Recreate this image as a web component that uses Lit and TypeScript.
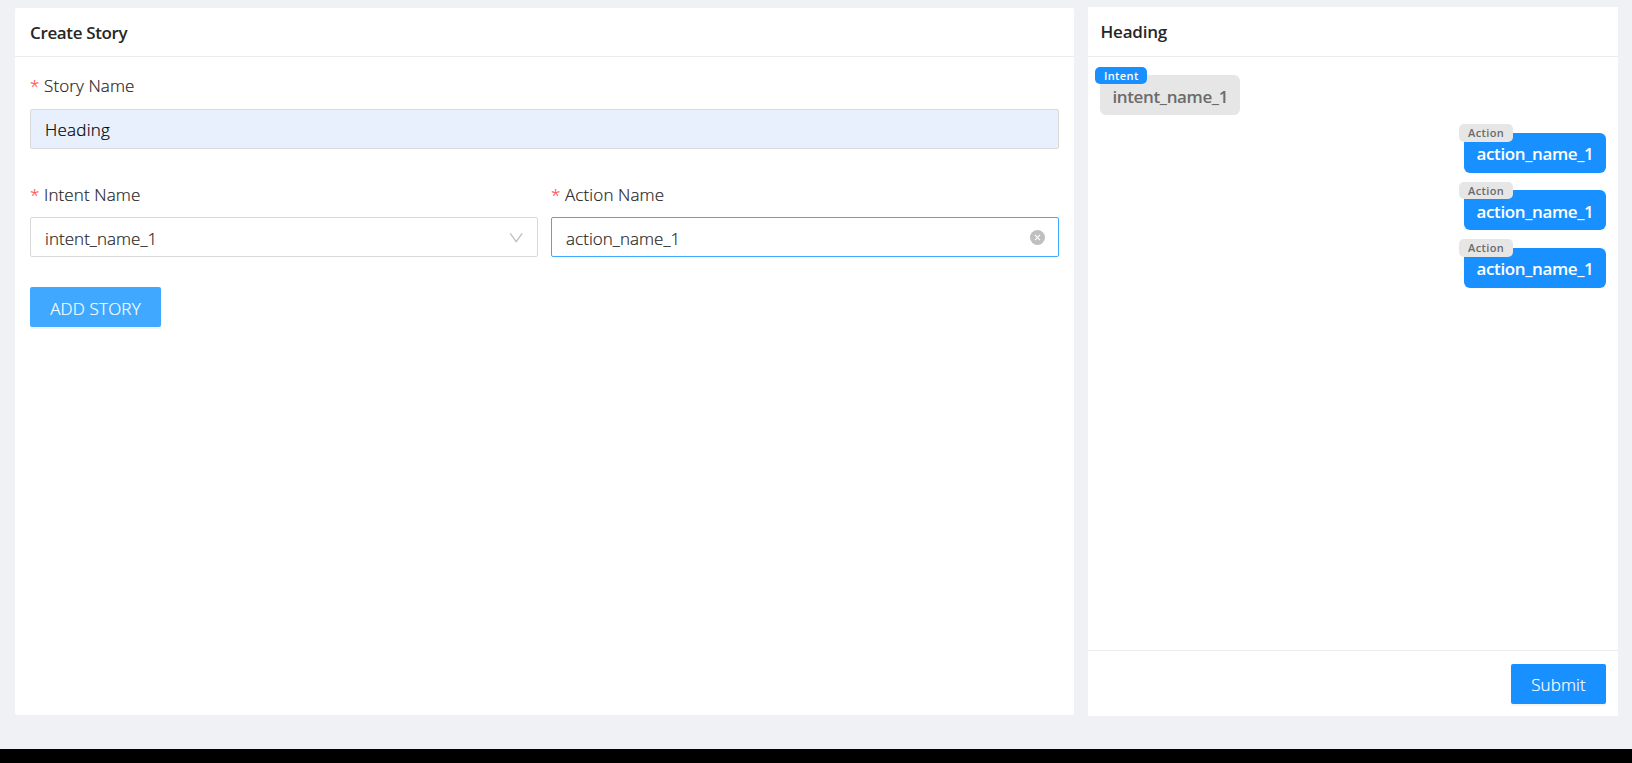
import { LitElement, html, css } from "lit";
import { customElement, property } from "lit/decorators.js";

@customElement("chat-bubble")
class ChatBubble extends LitElement {
  @property() tag = "";
  @property() text = "";
  @property({ reflect: true }) kind = "intent";
  static styles = css`
    :host {
      display: block;
      position: relative;
      box-sizing: border-box;
      height: 40px;
      padding: 1.8px 0 0 12.5px;
      border-radius: 6px;
      font-weight: 600;
      white-space: nowrap;
    }
    :host([kind="intent"]) { width: 140px; background: #e6e6e6; color: #6b6b6b; }
    :host([kind="action"]) { width: 142px; background: #1890ff; color: #fff; }
    .text { font-size: 17px; line-height: 40px; letter-spacing: -0.38px; }
    .tag {
      position: absolute;
      left: -5px;
      top: -8.4px;
      box-sizing: border-box;
      width: 52px;
      height: 17.5px;
      padding-left: 9px;
      border-radius: 5px;
      background: #1890ff;
      color: #fff;
      font-size: 11px;
      line-height: 18px;
      letter-spacing: 0.38px;
    }
    :host([kind="action"]) .tag { width: 54px; background: #e6e6e6; color: #6b6b6b; }
  `;
  render() {
    return html`<div class="text">${this.text}</div><div class="tag">${this.tag}</div>`;
  }
}

@customElement("app-root")
class AppRoot extends LitElement {
  static styles = css`
    :host {
      display: block;
      box-sizing: border-box;
      height: 763px;
      background: #f0f1f5;
      border-bottom: 14px solid #000;
      padding: 7px 14px 0 15px;
      font-family: "Open Sans", "Noto Sans", sans-serif;
      font-size: 17px;
      color: #262626;
      overflow: hidden;
    }
    * { box-sizing: border-box; }
    .page { display: flex; gap: 14px; align-items: flex-start; }
    .card { background: #fff; }
    .story { width: 1059px; height: 707px; margin-top: 1px; border-radius: 2px; }
    .preview { width: 530px; height: 709px; display: flex; flex-direction: column; }
    .head { height: 49px; border-bottom: 1px solid #ececee; padding: 1px 15px 0; line-height: 48px; font-weight: 600; }
    .preview .head { height: 50px; padding: 1px 12px 0 12.5px; }
    .title { letter-spacing: -0.36px; }
    .preview .title { letter-spacing: -0.2px; }
    .body { padding: 13px 15px 0; }
    .label, .field, .btn { font-weight: 300; letter-spacing: 0.12px; -webkit-text-stroke: 0.2px currentColor; }
    .label { display: flex; height: 39px; line-height: 34px; }
    .label.first { line-height: 32px; }
    .star { width: 14px; color: #ff4d4f; }
    .field {
      display: flex; align-items: center; justify-content: space-between;
      height: 40px; padding: 0 14px; border: 1px solid #d9d9d9; border-radius: 2px;
    }
    .row .field span { padding-top: 2px; letter-spacing: 0.04px; }
    .filled { background: #e8f0fe; color: #000; letter-spacing: 0.25px; }
    .row .focus { border-color: #40a9ff; padding-right: 13px; }
    .row { display: grid; grid-template-columns: 508px 508px; gap: 13px; margin-top: 29px; }
    .btn {
      display: flex; align-items: center; justify-content: center;
      height: 40px; border-radius: 2px; color: #fff; background: #1890ff;
      box-shadow: 0 2px 0 rgba(0, 0, 0, 0.045);
    }
    .add { width: 131px; margin-top: 30px; padding-top: 2px; background: #40a9ff; letter-spacing: 0.2px; }
    .submit { width: 95px; }
    .chat { flex: 1; display: flex; flex-direction: column; gap: 17.5px; padding: 18px 12px 0; }
    .chat chat-bubble[kind="action"] { align-self: flex-end; }
    .foot { height: 66px; border-top: 1px solid #ececee; padding: 13px 12px 0; display: flex; justify-content: flex-end; }
    svg { display: block; }
  `;
  label(t: string, extra = "") {
    return html`<div class="label ${extra}"><span class="star">*</span><span>${t}</span></div>`;
  }
  render() {
    return html`<div class="page">
      <section class="card story">
        <div class="head"><span class="title">Create Story</span></div>
        <div class="body">
          ${this.label("Story Name", "first")}
          <div class="field filled"><span>Heading</span></div>
          <div class="row">
            <div>${this.label("Intent Name")}
              <div class="field"><span>intent_name_1</span>
                <svg width="14" height="14" viewBox="0 0 14 14"><path d="M1.2 3.3 7.2 11.6 13.2 3.3" fill="none" stroke="#bfbfbf" stroke-width="1.3"/></svg>
              </div>
            </div>
            <div>${this.label("Action Name")}
              <div class="field focus"><span>action_name_1</span>
                <svg width="15" height="15" viewBox="0 0 15 15"><circle cx="7.5" cy="7.5" r="7.5" fill="#bfbfbf"/><path d="M5 4.8 10 10.2M10 4.8 5 10.2" stroke="#fff" stroke-width="1.1"/></svg>
              </div>
            </div>
          </div>
          <div class="btn add"><span>ADD STORY</span></div>
        </div>
      </section>
      <section class="card preview">
        <div class="head"><span class="title">Heading</span></div>
        <div class="chat">
          <chat-bubble kind="intent" tag="Intent" text="intent_name_1"></chat-bubble>
          ${[1, 2, 3].map(() => html`<chat-bubble kind="action" tag="Action" text="action_name_1"></chat-bubble>`)}
        </div>
        <div class="foot"><div class="btn submit"><span>Submit</span></div></div>
      </section>
    </div>`;
  }
}
